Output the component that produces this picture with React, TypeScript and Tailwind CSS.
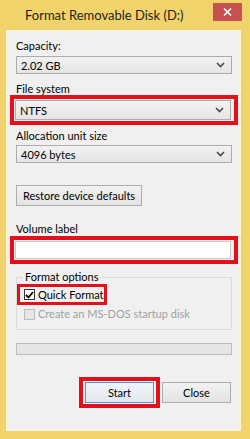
import React from "react";

const font = { fontFamily: 'Lato, "Noto Sans", sans-serif' };

function Chevron() {
  return (
    <svg width="9" height="6" viewBox="0 0 9 6" className="shrink-0">
      <path d="M1 1 L4.5 4.5 L8 1" fill="none" stroke="#4a4a4a" strokeWidth="1.6" />
    </svg>
  );
}

function Select({ value, h = "h-[18px]" }: { value: string; h?: string }) {
  return (
    <div className={`${h} w-[216px] flex items-center justify-between pl-[4px] pr-[6px] border border-[#acacac] bg-gradient-to-b from-[#f2f2f2] to-[#e5e5e5] text-black leading-none`}>
      <span>{value}</span>
      <Chevron />
    </div>
  );
}

export default function App() {
  return (
    <div className="w-[250px] h-[439px] bg-[#f1d36c] flex flex-col overflow-hidden whitespace-nowrap" style={font}>
      {/* title bar */}
      <div className="h-[30px] flex items-start shrink-0">
        <div className="flex-1 min-w-0 pl-[25px] pt-[7px] text-[13px] leading-[17px] text-[#1e1e1e]">Format Removable Disk (D:)</div>
        <div className="shrink-0 w-[29px] h-[18px] mt-[3px] mr-[8px] bg-[#c75050] flex items-center justify-center">
          <svg width="9" height="8" viewBox="0 0 9 8">
            <path d="M1 0.5 L8 7.5 M8 0.5 L1 7.5" stroke="white" strokeWidth="1.6" />
          </svg>
        </div>
      </div>
      {/* client */}
      <div className="ml-[6px] mr-[9px] h-[401px] border border-[#fbf4d6] bg-[#f0f0f0] flex flex-col pl-[9px] text-[11px] leading-[14px] text-black">
        <div className="mt-[8px]">Capacity:</div>
        <div className="mt-[3px]"><Select value="2.02 GB" /></div>
        <div className="mt-[8px]">File system</div>
        <div className="-ml-[6px] -mt-[1px] w-[228px] border-[4px] border-[#e3101c] p-[1px]">
          <Select value="NTFS" h="h-[20px]" />
        </div>
        <div className="mt-[4px]">Allocation unit size</div>
        <div className="mt-[2px]"><Select value="4096 bytes" /></div>
        <div className="mt-[22px] w-[126px] h-[21px] border border-[#adadad] bg-gradient-to-b from-[#f2f2f2] to-[#e3e3e3] flex items-center justify-center">
          Restore device defaults
        </div>
        <div className="mt-[16px]">Volume label</div>
        <div className="-ml-[6px] w-[228px] border-[4px] border-[#e3101c] p-[1px]">
          <div className="h-[18px] w-[216px] bg-white border border-[#c8c8c8]" />
        </div>
        {/* group box */}
        <div className="mt-[13px] w-[216px] h-[53px] border border-[#dcdcdc] relative">
          <div className="absolute -top-[8px] left-[6px] bg-[#f0f0f0] px-[2px]">Format options</div>
          <div className="mt-[6px] w-[90px] h-[21px] border-[3px] border-[#e3101c] flex items-center pl-[4px] gap-[3px]">
            <div className="w-[11px] h-[11px] bg-white border border-[#333] flex items-center justify-center">
              <svg width="9" height="8" viewBox="0 0 9 8">
                <path d="M1 4 L3.5 6.5 L8 1" fill="none" stroke="#000" strokeWidth="1.8" />
              </svg>
            </div>
            <span>Quick Format</span>
          </div>
          <div className="flex items-center pl-[7px] gap-[3px] mt-[2px] text-[#a0a0a0]">
            <div className="w-[11px] h-[11px] bg-[#e6e6e6] border border-[#bcbcbc]" />
            <span>Create an MS-DOS startup disk</span>
          </div>
        </div>
        <div className="mt-[13px] w-[216px] h-[12px] border border-[#bcbcbc] bg-[#e6e6e6]" />
        <div className="mt-[22px] flex items-center">
          <div className="ml-[63px] w-[81px] h-[31px] border-[4px] border-[#e3101c] flex items-center justify-center">
            <div className="w-[69px] h-[21px] border border-[#4f95d8] bg-gradient-to-b from-[#eef4fa] to-[#e2e8ee] flex items-center justify-center">Start</div>
          </div>
          <div className="ml-[2px] w-[69px] h-[21px] border border-[#adadad] bg-gradient-to-b from-[#f2f2f2] to-[#e3e3e3] flex items-center justify-center">Close</div>
        </div>
      </div>
    </div>
  );
}
